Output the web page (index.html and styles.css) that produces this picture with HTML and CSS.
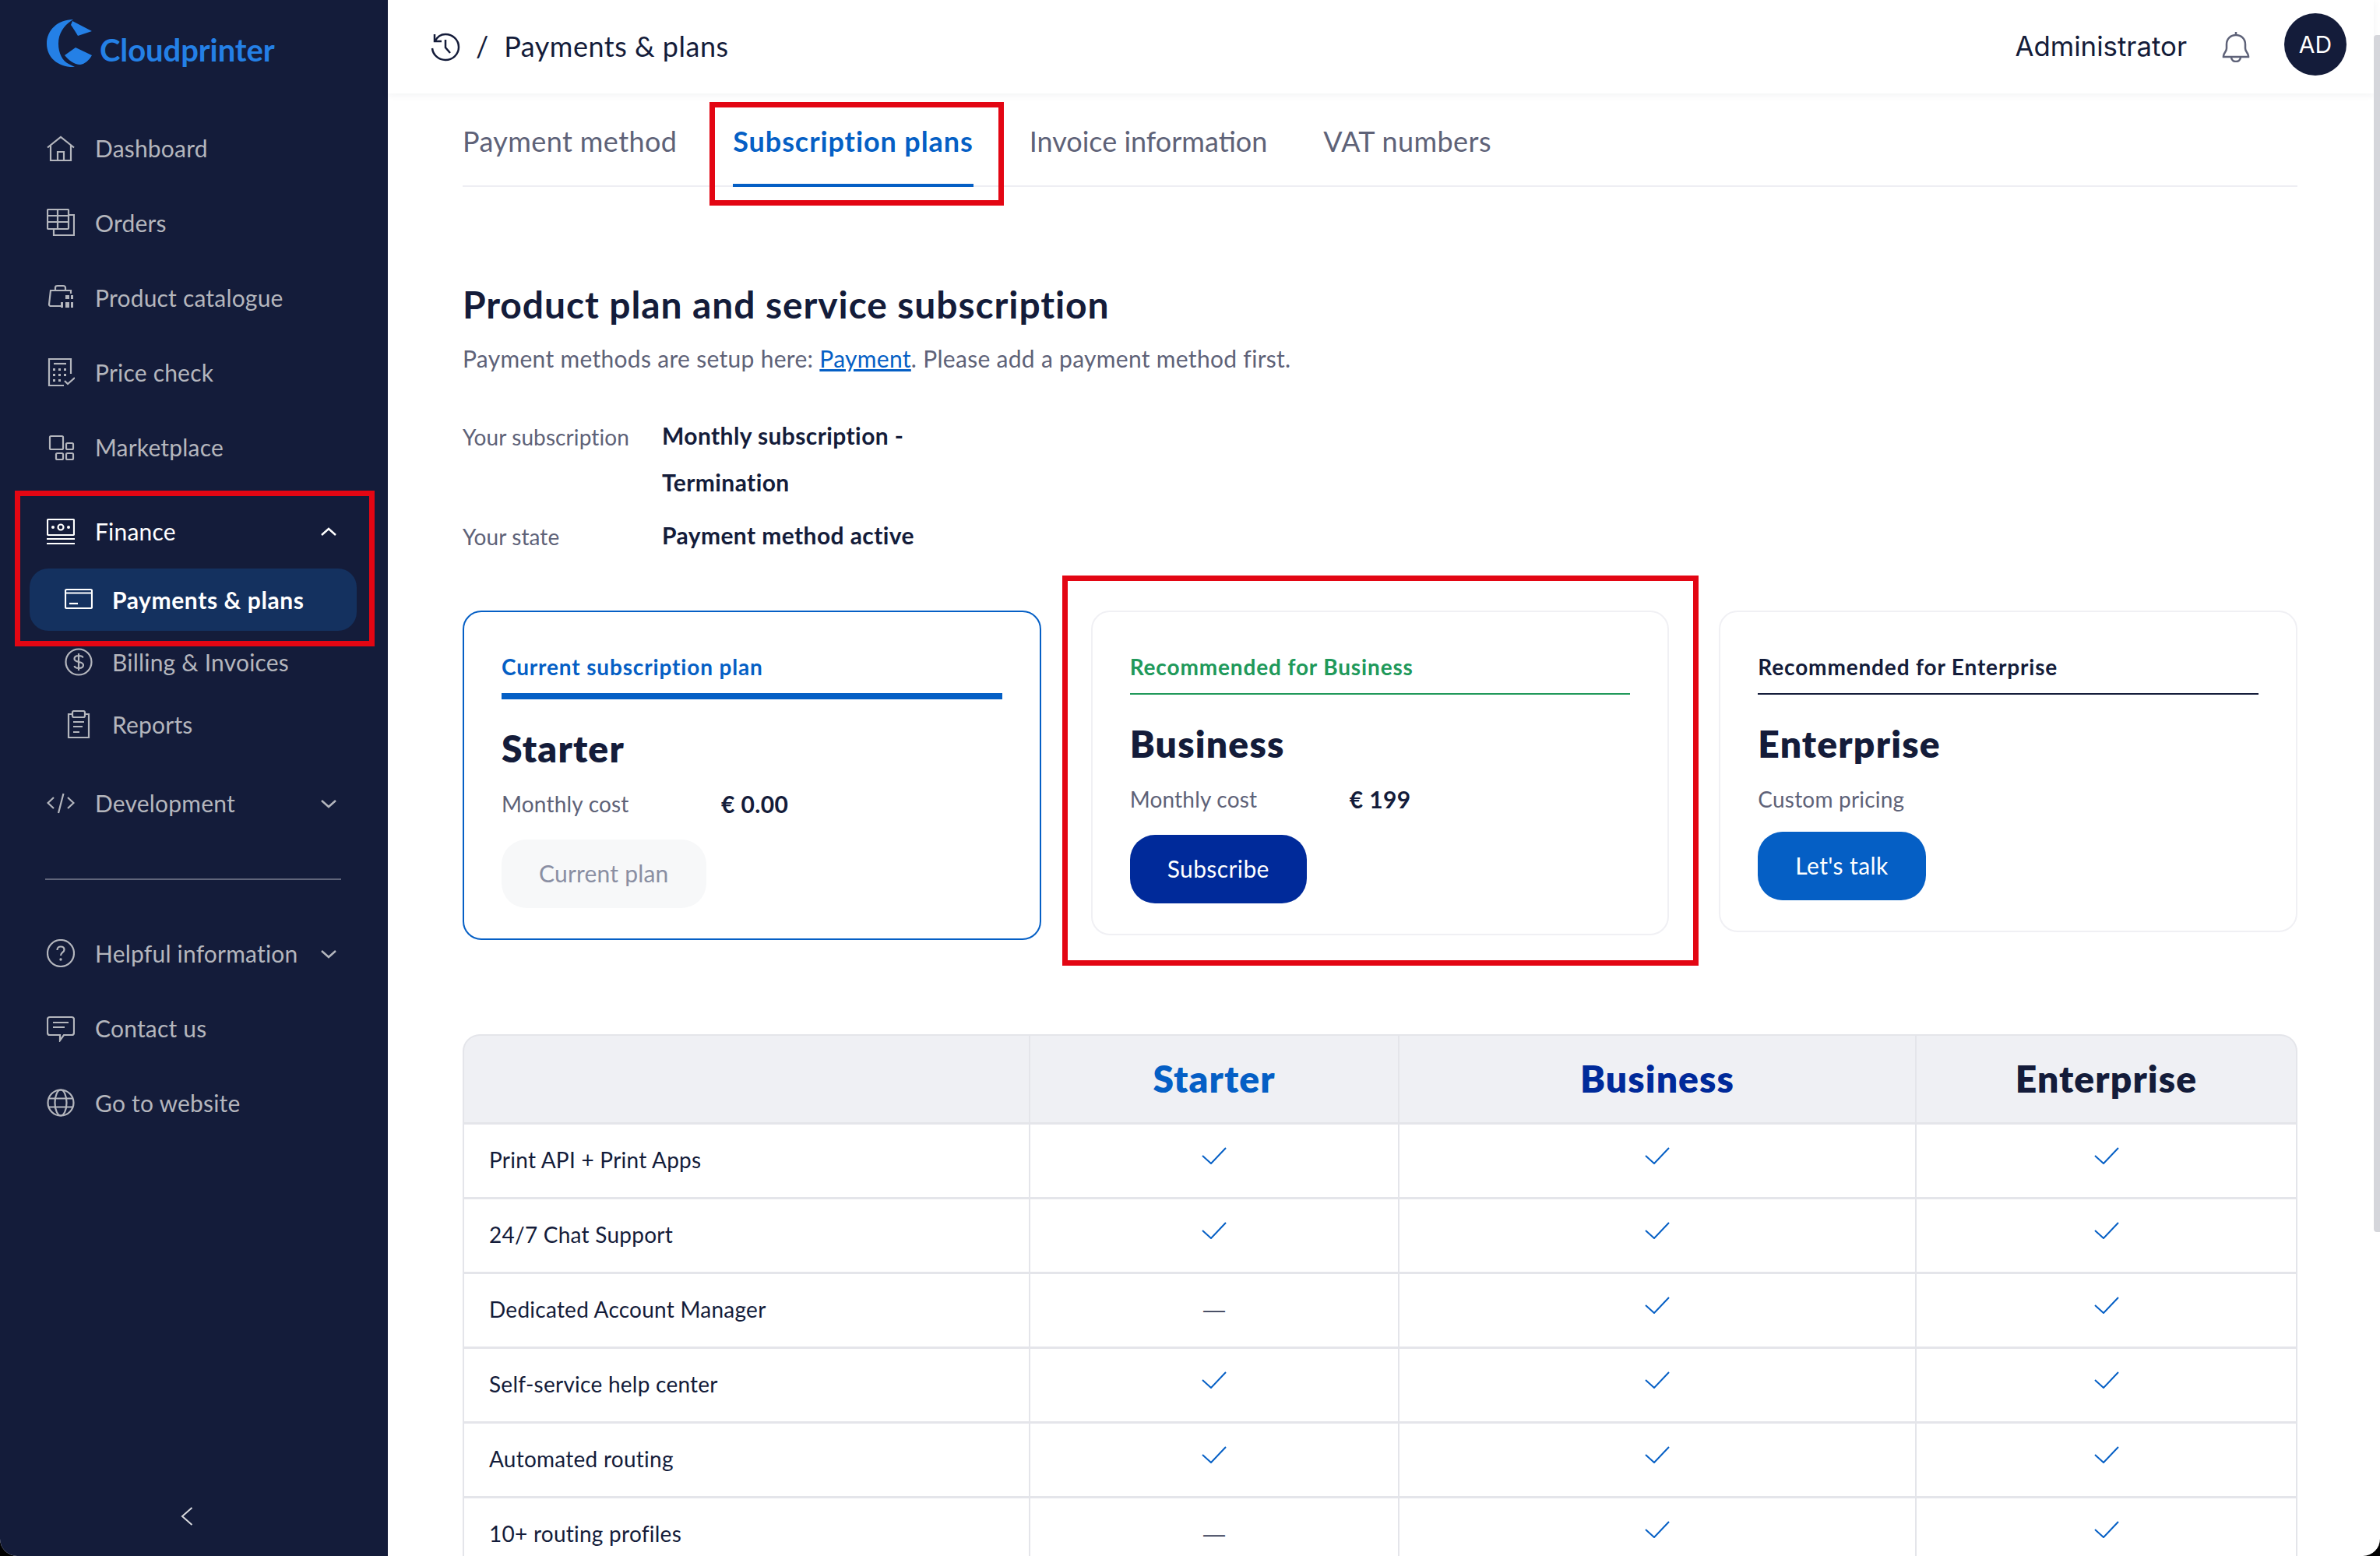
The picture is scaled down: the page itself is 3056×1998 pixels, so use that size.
FILE: index.html
```html
<!DOCTYPE html>
<html lang="en">
<head>
<meta charset="utf-8">
<title>Payments &amp; plans</title>
<link rel="stylesheet" href="styles.css">
</head>
<body>
<svg class="defs" aria-hidden="true">
  <symbol id="check" viewBox="0 0 32 22"><path d="M1 11 L12 21 L31 1"/></symbol>
  <symbol id="chev-down" viewBox="0 0 20 12"><path d="M1 2 L10 10 L19 2"/></symbol>
</svg>
<div class="window">
  <aside class="sidebar">
    <div class="logo">
      <svg class="logo-mark" viewBox="0 0 58 62"><path d="M34 0C14 0 0 14 0 31C0 49 15 62 36 61L28 57C20 53 15 43 15 31C15 18 22 8 31 2Z"/><path d="M33 2L58 15L40 21C37 16 34 11 31 7Z"/><path d="M23 46L37 36L58 46C54 53 49 57 43 58C35 58 28 52 23 46Z"/></svg>
      <span class="logo-text">Cloudprinter</span>
    </div>
    <nav class="nav">
      <a class="row"><svg class="ico" viewBox="0 0 36 36"><path d="M1 17.500L18 4L35 17.500"/><path d="M5 15V34H31V15"/><path d="M14 34V23H22V34"/></svg><span>Dashboard</span></a>
      <a class="row"><svg class="ico" viewBox="0 0 36 36"><rect x="1" y="1" width="27" height="25" rx="1"/><path d="M1 9H28M1 17H28M14 1V26"/><path d="M28 8H35V34H9V26"/></svg><span>Orders</span></a>
      <a class="row"><svg class="ico" viewBox="0 0 36 36"><path d="M11 9V5.500C11 3.500 12 3 14 3H21C23 3 24 3.500 24 5.500V9"/><path d="M31 13V9H5L3 27C3 29 4 29 6 29H19"/><path class="fill" d="M24 15h5v5h-5zM31 15h3v5h-3zM24 24h5v7h-5zM31 24h3v7h-3zM18 24h3v7h-3z"/></svg><span>Product catalogue</span></a>
      <a class="row"><svg class="ico" viewBox="0 0 36 36"><path d="M31 20V1H3V35H22"/><path d="M9 7H25"/><path class="fill" d="M8 13h3v3H8zM15 13h3v3h-3zM22 13h3v3h-3zM8 20h3v3H8zM15 20h3v3h-3zM22 20h3v3h-3zM8 27h3v3H8zM15 27h3v3h-3z"/><path d="M23 29L27 33L36 25"/></svg><span>Price check</span></a>
      <a class="row"><svg class="ico" viewBox="0 0 36 36"><rect x="4" y="4" width="17" height="17" rx="1.500"/><rect x="25" y="13" width="9" height="8" rx="1.500"/><rect x="12" y="26" width="9" height="8" rx="1.500"/><rect x="25" y="26" width="9" height="8" rx="1.500"/></svg><span>Marketplace</span></a>

      <a class="row row-open"><svg class="ico" viewBox="0 0 36 36"><rect x="1" y="3" width="34" height="20" rx="1"/><circle cx="18" cy="13" r="3.500"/><circle class="fill" cx="8" cy="13" r="2"/><circle class="fill" cx="28" cy="13" r="2"/><path d="M0 28H36M0 34H36"/></svg><span>Finance</span><svg class="chev chev-up" viewBox="0 0 20 12"><use href="#chev-down"/></svg></a>
      <div class="sub">
        <a class="subrow subrow-on"><svg class="ico" viewBox="0 0 36 36"><rect x="1" y="5" width="34" height="24" rx="1.500"/><path d="M1 9.500H35"/><path d="M6 23H17"/></svg><span>Payments &amp; plans</span></a>
        <a class="subrow"><svg class="ico" viewBox="0 0 36 36"><circle cx="18" cy="18" r="16.500"/><path d="M23.500 12.500C23 10.500 21 10 18 10C14.500 10 12.500 11.500 12.500 14C12.500 19.500 24 16.500 24 22C24 24.500 21.500 26 18 26C15 26 13 25 12.500 23M18 7V29"/></svg><span>Billing &amp; Invoices</span></a>
        <a class="subrow"><svg class="ico" viewBox="0 0 36 36"><path d="M10 5H5V35H31V5H26"/><rect x="10" y="1" width="16" height="8" rx="2"/><path d="M11 15H25M11 21H23M11 28H19"/></svg><span>Reports</span></a>
      </div>
      <a class="row"><svg class="ico" viewBox="0 0 36 36"><path d="M9 11L1.500 18L9 25M27 11L34.500 18L27 25M21.500 6L15 31"/></svg><span>Development</span><svg class="chev" viewBox="0 0 20 12"><use href="#chev-down"/></svg></a>
      <hr class="rule">
      <a class="row"><svg class="ico" viewBox="0 0 36 36"><ellipse cx="18" cy="18" rx="17" ry="17"/><path d="M13.500 14C13.500 11 15.500 9.500 18 9.500C20.500 9.500 22.500 11 22.500 13.500C22.500 17 18 17 18 21"/><circle class="fill" cx="18" cy="26" r="1.700"/></svg><span>Helpful information</span><svg class="chev" viewBox="0 0 20 12"><use href="#chev-down"/></svg></a>
      <a class="row"><svg class="ico" viewBox="0 0 36 36"><path d="M4 4H32C34 4 35 5 35 7V24C35 26 34 27 32 27H22L17 34V27H4C2 27 1 26 1 24V7C1 5 2 4 4 4Z"/><path d="M8 11H28M8 17H23"/></svg><span>Contact us</span></a>
      <a class="row"><svg class="ico" viewBox="0 0 36 36"><circle cx="18" cy="18" r="16.500"/><ellipse cx="18" cy="18" rx="7.500" ry="16.500"/><path d="M2 12.500H34M2 23.500H34"/></svg><span>Go to website</span></a>
    </nav>
    <svg class="collapse" viewBox="0 0 16 26"><path d="M14.500 2L2 13L14.500 24"/></svg>
  </aside>

  <div class="content">
    <header class="topbar">
      <div class="crumbs">
        <svg class="history" viewBox="0 0 38 38"><path d="M5 3V12H14"/><path d="M5.500 12C8.500 6 13 3 19 3C28 3 36 10 36 19.500C36 29 28 36 19 36C10 36 3 29.500 2 21"/><path d="M19 10V20L25 27"/></svg>
        <span class="slash">/</span>
        <span class="crumb-text">Payments &amp; plans</span>
      </div>
      <div class="user">
        <span class="user-name">Administrator</span>
        <svg class="bell" viewBox="0 0 36 40"><path d="M18 1V5"/><path d="M2 32C2 28 6 27 6 22V17C6 10 11 5 18 5C25 5 30 10 30 17V22C30 27 34 28 34 32V33H2Z"/><path d="M12 33C12 37 15 39 18 39C21 39 24 37 24 33"/></svg>
        <span class="avatar">AD</span>
      </div>
    </header>
    <main class="main">
      <div class="tabs">
        <a class="tab">Payment method</a>
        <a class="tab tab-on">Subscription plans</a>
        <a class="tab tab-plain">Invoice information</a>
        <a class="tab">VAT numbers</a>
      </div>
      <h1 class="title">Product plan and service subscription</h1>
      <p class="lead">Payment methods are setup here: <a class="link">Payment</a>. Please add a payment method first.</p>
      <dl class="facts">
        <dt>Your subscription</dt><dd>Monthly subscription - Termination</dd>
        <dt>Your state</dt><dd>Payment method active</dd>
      </dl>
      <section class="cards">
        <article class="card card-current">
          <h3 class="eyebrow eyebrow-blue">Current subscription plan</h3>
          <h2 class="plan">Starter</h2>
          <div class="price"><span class="price-label">Monthly cost</span><b>€ 0.00</b></div>
          <a class="btn btn-muted">Current plan</a>
        </article>
        <article class="card">
          <h3 class="eyebrow eyebrow-green">Recommended for Business</h3>
          <h2 class="plan">Business</h2>
          <div class="price"><span class="price-label">Monthly cost</span><b>€ 199</b></div>
          <a class="btn btn-navy">Subscribe</a>
        </article>
        <article class="card">
          <h3 class="eyebrow eyebrow-dark">Recommended for Enterprise</h3>
          <h2 class="plan">Enterprise</h2>
          <div class="price price-tight"><span class="price-label">Custom pricing</span></div>
          <a class="btn btn-blue">Let's talk</a>
        </article>
      </section>
      <table class="compare">
        <thead>
          <tr><th></th><th class="h-starter">Starter</th><th class="h-business">Business</th><th class="h-enterprise">Enterprise</th></tr>
        </thead>
        <tbody>
          <tr><td>Print API + Print Apps</td><td class="mark"><svg class="tick"><use href="#check"/></svg></td><td class="mark"><svg class="tick"><use href="#check"/></svg></td><td class="mark"><svg class="tick"><use href="#check"/></svg></td></tr>
          <tr><td>24/7 Chat Support</td><td class="mark"><svg class="tick"><use href="#check"/></svg></td><td class="mark"><svg class="tick"><use href="#check"/></svg></td><td class="mark"><svg class="tick"><use href="#check"/></svg></td></tr>
          <tr><td>Dedicated Account Manager</td><td class="none">—</td><td class="mark"><svg class="tick"><use href="#check"/></svg></td><td class="mark"><svg class="tick"><use href="#check"/></svg></td></tr>
          <tr><td>Self-service help center</td><td class="mark"><svg class="tick"><use href="#check"/></svg></td><td class="mark"><svg class="tick"><use href="#check"/></svg></td><td class="mark"><svg class="tick"><use href="#check"/></svg></td></tr>
          <tr><td>Automated routing</td><td class="mark"><svg class="tick"><use href="#check"/></svg></td><td class="mark"><svg class="tick"><use href="#check"/></svg></td><td class="mark"><svg class="tick"><use href="#check"/></svg></td></tr>
          <tr><td>10+ routing profiles</td><td class="none">—</td><td class="mark"><svg class="tick"><use href="#check"/></svg></td><td class="mark"><svg class="tick"><use href="#check"/></svg></td></tr>
        </tbody>
      </table>
    </main>
    <div class="scrollthumb"></div>
  </div>
  <div class="note note-nav"></div>
  <div class="note note-tab"></div>
  <div class="note note-card"></div>
</div>
</body>
</html>
```
FILE: styles.css
```css
* { box-sizing: border-box; }
html, body { margin: 0; height: 100%; background: #000; }
body { width: 3056px; height: 1998px; overflow: hidden; font-family: "Lato", "Noto Sans", sans-serif; color: #141c3a; }
a { color: inherit; text-decoration: none; }
.defs { position: absolute; width: 0; height: 0; }
symbol path { fill: none; stroke: currentColor; }

.window { position: relative; display: flex; width: 3056px; height: 1998px; background: #fff; border-radius: 0 0 22px 22px; overflow: hidden; }

/* sidebar */
.sidebar { flex: 0 0 498px; display: flex; flex-direction: column; background: #141c3a; color: #b4b6bd; font-size: 30px; letter-spacing: .2px; }
.logo { display: flex; align-items: flex-start; height: 142px; padding: 25px 0 0 60px; color: #2480e6; }
.logo-mark { width: 58px; height: 62px; fill: currentColor; flex: none; }
.logo-text { margin: 15px 0 0 10px; font-size: 40px; line-height: 48px; font-weight: 700; letter-spacing: -.1px; }
.nav { display: flex; flex-direction: column; }
.row { display: flex; align-items: center; height: 96px; padding: 0 66px 0 60px; gap: 26px; }
.row-open { margin-top: 12px; color: #fff; }
.ico { width: 36px; height: 36px; flex: none; fill: none; stroke: currentColor; stroke-width: 2.200; }
.ico .fill { fill: currentColor; stroke: none; }
.chev { width: 20px; height: 12px; margin: 2px 0 0 auto; flex: none; fill: none; stroke: currentColor; stroke-width: 2.500; }
.chev-up { transform: scaleY(-1); }
.sub { display: flex; flex-direction: column; margin: 0 40px 13px 38px; }
.subrow { display: flex; align-items: center; height: 80px; padding-left: 45px; gap: 25px; }
.subrow-on { background: #14315f; border-radius: 24px; color: #fff; font-weight: 700; letter-spacing: .6px; }
.rule { width: 380px; height: 2px; margin: 49px 0 46px 58px; border: 0; background: #60657a; }
.collapse { width: 16px; height: 26px; margin: auto 0 38px 232px; fill: none; stroke: #d8d9dd; stroke-width: 2; }

/* top bar */
.content { position: relative; flex: 1; display: flex; flex-direction: column; min-width: 0; }
.topbar { display: flex; flex: 0 0 120px; align-items: center; justify-content: space-between; margin-right: 8px; padding: 0 35px 0 55px; background: #fff; box-shadow: 0 2px 10px rgba(20, 28, 58, .06); font-size: 36px; }
.crumbs { display: flex; align-items: center; }
.history { width: 38px; height: 38px; fill: none; stroke: #141c3a; stroke-width: 2.500; }
.slash { margin: 0 20px; padding-bottom: 3px; }
.crumb-text { padding-bottom: 3px; letter-spacing: .5px; }
.user { display: flex; align-items: center; }
.user-name { padding-bottom: 3px; font-family: "Inter", sans-serif; font-size: 34.800px; }
.bell { width: 36px; height: 40px; margin: 0 44px 0 45px; fill: none; stroke: #5e6278; stroke-width: 2.500; }
.avatar { display: flex; align-items: center; justify-content: center; width: 80px; height: 80px; margin-bottom: 6px; border-radius: 50%; background: #141c3a; color: #fff; font-family: "Inter", sans-serif; font-size: 30px; }

/* main */
.main { flex: 1; min-height: 0; padding: 0 106px 0 96px; overflow: hidden; }
.tabs { display: flex; gap: 72px; box-shadow: inset 0 -2px 0 #eeeef3; }
.tab { height: 120px; padding: 40px 0 0; font-size: 36px; line-height: 42px; letter-spacing: .4px; color: #5e6278; }
.tab-plain { letter-spacing: 0; }
.tab-on { border-bottom: 4px solid #055fc5; color: #055fc5; font-weight: 700; letter-spacing: .9px; }
.title { margin: 121px 0 0; font-size: 48px; line-height: 60px; font-weight: 700; letter-spacing: .9px; }
.lead { margin: 19px 0 0; font-size: 30px; line-height: 40px; letter-spacing: .3px; color: #5e6278; }
.link { color: #055fc5; text-decoration: underline; }
.facts { display: grid; grid-template-columns: 256px 360px; row-gap: 8px; margin: 49px 0 0; font-size: 28px; line-height: 60px; letter-spacing: .1px; }
.facts dt { padding-top: 4px; line-height: 56px; color: #5e6278; }
.facts dd { margin: 0; font-size: 30px; font-weight: 700; letter-spacing: .4px; }

/* plan cards */
.cards { display: grid; grid-template-columns: repeat(3, 1fr); gap: 64px; align-items: start; margin-top: 67px; }
.card { padding: 52px 48px 39px; border: 2px solid #f0f0f4; border-radius: 24px; }
.card-current { border-color: #055fc5; }
.eyebrow { margin: 0; padding-bottom: 16px; border-bottom: 2px solid; font-size: 28px; line-height: 36px; font-weight: 700; letter-spacing: .85px; }
.eyebrow-blue { color: #055fc5; border-bottom-width: 8px; }
.eyebrow-green { color: #20995a; }
.eyebrow-dark { color: #141c3a; }
.plan { margin: 33px 0 0; font-size: 48px; line-height: 60px; font-weight: 800; letter-spacing: 1.200px; }
.price { display: flex; align-items: center; height: 40px; margin: 21px 0 26px; font-size: 30px; letter-spacing: .4px; }
.price-tight { margin-bottom: 22px; }
.price-label { flex: 0 0 282px; font-size: 28px; letter-spacing: .2px; color: #5e6278; }
.btn { display: inline-flex; align-items: center; height: 88px; padding: 0 48px 3px; border-radius: 32px; font-size: 30px; letter-spacing: .4px; color: #fff; }
.btn-muted { background: #f7f8f9; color: #8a8fa3; letter-spacing: .2px; }
.btn-navy { background: #002a9a; }
.btn-blue { background: #055fc5; }

/* comparison table */
.compare { width: 2356px; margin-top: 121px; table-layout: fixed; border-collapse: separate; border-spacing: 0; font-size: 28px; letter-spacing: .25px; }
.compare th, .compare td { border-right: 2px solid #e4e5ea; border-bottom: 3px solid #e4e5ea; }
.compare th:first-child, .compare td:first-child { width: 729px; border-left: 2px solid #e4e5ea; }
.compare th:nth-child(2) { width: 474px; }
.compare th:nth-child(3) { width: 664px; }
.compare th { height: 116px; padding-bottom: 4px; background: #eff0f4; border-top: 2px solid #e4e5ea; font-size: 48px; font-weight: 800; letter-spacing: 1.100px; }
.compare th:first-child { border-top-left-radius: 22px; }
.compare th:last-child { border-top-right-radius: 22px; }
.h-starter { color: #055fc5; }
.h-business { color: #002a9a; }
.h-enterprise { color: #141c3a; }
.compare td { height: 96px; padding: 0 32px 3px; }
.compare td.mark { padding-bottom: 21px; text-align: center; color: #055fc5; }
.compare td.none { padding-bottom: 2px; text-align: center; font-family: "Liberation Sans", sans-serif; color: #3a4058; }
.tick { display: inline-block; width: 32px; height: 22px; vertical-align: middle; fill: none; stroke: currentColor; stroke-width: 2; }
.scrollthumb { position: absolute; top: 45px; right: 0; width: 8px; height: 1537px; background: #d5d6db; border-radius: 4px 0 0 4px; }

/* annotation boxes */
.note { position: absolute; border: 7px solid #e30613; pointer-events: none; }
.note-nav { left: 19px; top: 630px; width: 462px; height: 200px; }
.note-tab { left: 911px; top: 131px; width: 378px; height: 133px; }
.note-card { left: 1364px; top: 739px; width: 817px; height: 501px; }
```
